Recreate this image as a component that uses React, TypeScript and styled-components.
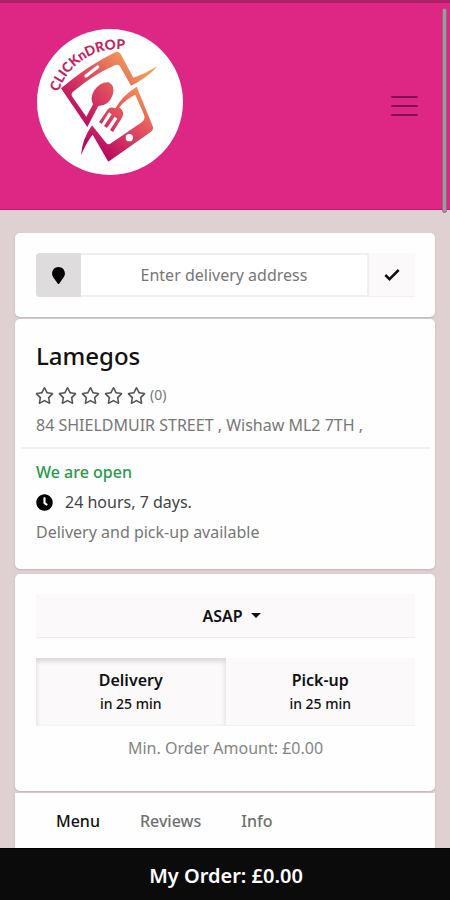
import React from "react";
import styled, { createGlobalStyle, css } from "styled-components";
import { Check } from "lucide-react";
import { FaClock, FaMapMarker, FaRegStar } from "react-icons/fa";

const GlobalStyle = createGlobalStyle`
  *, *::before, *::after { box-sizing: border-box; }
  body {
    margin: 0;
    background: #dfd1d2;
    color: #111;
    font-family: "Noto Sans", "Open Sans", sans-serif;
    font-size: 16px;
    line-height: 24px;
  }
  button, input { font: inherit; color: inherit; }
`;

const Page = styled.div`
  position: relative;
  min-height: 100vh;
  display: flex;
  flex-direction: column;
`;

const Header = styled.header`
  display: flex;
  align-items: center;
  justify-content: space-between;
  height: 210px;
  padding: 0 32px 8px 36px;
  background: #de2785;
  border-top: 3px solid #ad2068;
  border-bottom: 1px solid #c91873;
`;

const LogoLink = styled.a`
  display: block;
  height: 148px;
`;

const MenuButton = styled.button`
  display: flex;
  flex-direction: column;
  gap: 7px;
  margin-top: 8px;
  padding: 0;
  border: 0;
  background: none;
`;

const MenuBar = styled.span`
  width: 27px;
  height: 2px;
  border-radius: 1px;
  background: #850f54;
`;

const ScrollThumb = styled.div`
  position: absolute;
  top: 8px;
  right: 3px;
  width: 5px;
  height: 205px;
  border-radius: 3px;
  background: #a09a9e;
  border: 1px solid #8d6b7e;
`;

const Main = styled.main`
  flex: 1;
  display: flex;
  flex-direction: column;
  padding: 23px 15px 0;
`;

const Card = styled.section<{ $gap?: number; $grow?: boolean }>`
  background: #fefefe;
  border-radius: 5px;
  padding: 20px 20px 20px 21px;
  margin-bottom: ${(p) => p.$gap ?? 0}px;
  box-shadow: 0 1px 2px #bdb5b5;
  ${(p) => p.$grow && css`flex: 1; padding: 16px 21px 0; border-radius: 0;`}
`;

const AddressForm = styled.form`
  display: flex;
  height: 44px;
`;

const PinLabel = styled.label`
  display: flex;
  align-items: center;
  justify-content: center;
  width: 45px;
  border-radius: 4px 0 0 4px;
  background: #dedcdc;
  color: #000;
`;

const AddressInput = styled.input`
  flex: 1;
  min-width: 0;
  padding: 0;
  border: solid #f0efef;
  border-width: 2px 2px 2px 0;
  background: #fff;
  text-align: center;
  outline: 0;
  &::placeholder { color: #777; opacity: 1; }
`;

const SubmitButton = styled.button`
  display: flex;
  align-items: center;
  justify-content: center;
  width: 46px;
  padding: 0;
  border: 0;
  border-bottom: 1px solid #f0eeee;
  background: #fbf9fa;
`;

const Name = styled.h1`
  margin: 0;
  font-size: 24px;
  font-weight: 500;
  line-height: 34px;
`;

const Rating = styled.div`
  display: flex;
  align-items: center;
  gap: 4px;
  height: 24px;
  margin-top: 10px;
  color: #777;
  font-size: 14px;
`;

const Stars = styled.span`
  display: flex;
  gap: 4px;
  margin-left: -1px;
  color: #555;
`;

const Address = styled.p`
  margin: 6px 0 10px;
  color: #777;
`;

const Divider = styled.hr`
  height: 2px;
  margin: 0 -15px;
  border: 0;
  background: #f0f0f0;
`;

const Status = styled.p<{ $color: string; $first?: boolean }>`
  display: flex;
  align-items: center;
  gap: 12px;
  margin: ${(p) => (p.$first ? 11 : 6)}px 0 0;
  color: ${(p) => p.$color};
  font-weight: ${(p) => (p.$first ? 500 : 400)};
  svg { color: #000; }
`;

const StatusGroup = styled.div`
  padding-bottom: 5px;
`;

const TimeButton = styled.button`
  display: flex;
  align-items: center;
  justify-content: center;
  gap: 8px;
  width: 100%;
  height: 44px;
  padding: 0 0 0 12px;
  border: 0;
  border-bottom: 1px solid #eeecec;
  background: #fbf9fa;
  font-weight: 600;
`;

const Caret = styled.span`
  border: 5px solid transparent;
  border-top-color: #111;
  border-bottom: 0;
`;

const Modes = styled.div`
  display: grid;
  grid-template-columns: 1fr 1fr;
  margin-top: 20px;
`;

const ModeButton = styled.button<{ $active?: boolean }>`
  height: 68px;
  padding: 0;
  border: 0;
  border-bottom: 1px solid #f3f1f1;
  background: #fbf9fa;
  font-weight: 600;
  ${(p) => p.$active && css`box-shadow: inset 0 3px 5px #d6d5d5;`}
`;

const ModeTime = styled.span`
  display: block;
  font-size: 14px;
  font-weight: 500;
`;

const Minimum = styled.p`
  margin: 10px 0 11px;
  color: #858585;
  text-align: center;
`;

const Tabs = styled.nav`
  display: flex;
  gap: 40px;
  padding: 0 20px;
`;

const Tab = styled.a<{ $active?: boolean }>`
  color: ${(p) => (p.$active ? "#111" : "#707070")};
  font-weight: 500;
  text-decoration: none;
`;

const OrderBar = styled.button`
  position: sticky;
  bottom: 0;
  width: 100%;
  height: 52px;
  padding: 2px 0 0 2px;
  border: 0;
  border-top: 1px solid #000;
  background: #0b0b0b;
  color: #fff;
  font-size: 20px;
  font-weight: 600;
`;

function Logo() {
  return (
    <svg width="148" height="148" viewBox="34 38 444 444" role="img" aria-label="CLICKnDROP">
      <defs>
        <linearGradient id="upper" gradientUnits="userSpaceOnUse" x1="160" y1="310" x2="320" y2="140">
          <stop offset="0" stopColor="#b90e61" />
          <stop offset="0.5" stopColor="#df4960" />
          <stop offset="1" stopColor="#f39758" />
        </linearGradient>
        <linearGradient id="lower" gradientUnits="userSpaceOnUse" x1="230" y1="410" x2="360" y2="240">
          <stop offset="0" stopColor="#b90b61" />
          <stop offset="0.5" stopColor="#df4560" />
          <stop offset="1" stopColor="#f58b56" />
        </linearGradient>
        <path id="arc" d="M101 230A190 190 0 0 1 330 108" />
      </defs>
      <circle cx="256" cy="260" r="219" fill="#fff" />
      <text fill="#c5235f" fontFamily="Lato, sans-serif" fontSize="41" fontWeight="900">
        <textPath href="#arc">CLICKnDROP</textPath>
      </text>
      <path
        fill="url(#upper)"
        d="M109 219Q190 150 273 110Q284 107 291 121L326 187Q365 174 398 153Q366 190 319 211L286 153Q281 145 270 150Q204 180 148 227Q137 235 143 244L185 304L205 267Q195 248 209 225Q227 199 252 201Q272 210 264 239Q252 272 221 272L188 335Z"
      />
      <path d="M184 182L219 155" stroke="#fff" strokeWidth="10" strokeLinecap="round" />
      <path
        fill="url(#lower)"
        d="M336 214L384 332Q388 343 378 350L251 439L204 358Q188 376 169 420Q172 372 202 330L244 382Q250 390 259 384L352 320Q363 311 358 298L332 238Q301 253 284 276Q303 291 291 309L265 350L256 344L278 310L270 304L247 338L238 332L261 297L253 291L231 326L223 320L250 281Q257 273 272 279Q292 242 336 214Z"
      />
      <circle cx="314" cy="367" r="11" fill="#fff" />
    </svg>
  );
}

export default function App() {
  return (
    <Page>
      <GlobalStyle />
      <Header>
        <LogoLink href="#" aria-label="Home"><Logo /></LogoLink>
        <MenuButton type="button" aria-label="Open navigation">
          <MenuBar /><MenuBar /><MenuBar />
        </MenuButton>
      </Header>
      <ScrollThumb />
      <Main>
        <Card $gap={2}>
          <AddressForm onSubmit={(e) => e.preventDefault()}>
            <PinLabel htmlFor="address" aria-label="Delivery address"><FaMapMarker size={17} /></PinLabel>
            <AddressInput id="address" placeholder="Enter delivery address" />
            <SubmitButton aria-label="Confirm address"><Check size={20} strokeWidth={3} strokeLinecap="butt" strokeLinejoin="miter" /></SubmitButton>
          </AddressForm>
        </Card>
        <Card $gap={5}>
          <Name>Lamegos</Name>
          <Rating>
            <Stars>
              {[1, 2, 3, 4, 5].map((n) => <FaRegStar key={n} size={19} />)}
            </Stars>
            (0)
          </Rating>
          <Address>84 SHIELDMUIR STREET , Wishaw ML2 7TH ,</Address>
          <Divider />
          <StatusGroup>
            <Status $color="#279b4a" $first>We are open</Status>
            <Status $color="#444"><FaClock size={17} />24 hours, 7 days.</Status>
            <Status $color="#777">Delivery and pick-up available</Status>
          </StatusGroup>
        </Card>
        <Card $gap={2}>
          <TimeButton type="button" aria-haspopup="listbox">ASAP <Caret /></TimeButton>
          <Modes>
            <ModeButton type="button" $active aria-pressed="true">Delivery<ModeTime>in 25 min</ModeTime></ModeButton>
            <ModeButton type="button" aria-pressed="false">Pick-up<ModeTime>in 25 min</ModeTime></ModeButton>
          </Modes>
          <Minimum>Min. Order Amount: £0.00</Minimum>
        </Card>
        <Card $grow>
          <Tabs>
            <Tab href="#menu" $active>Menu</Tab>
            <Tab href="#reviews">Reviews</Tab>
            <Tab href="#info">Info</Tab>
          </Tabs>
        </Card>
      </Main>
      <OrderBar type="button">My Order: £0.00</OrderBar>
    </Page>
  );
}
